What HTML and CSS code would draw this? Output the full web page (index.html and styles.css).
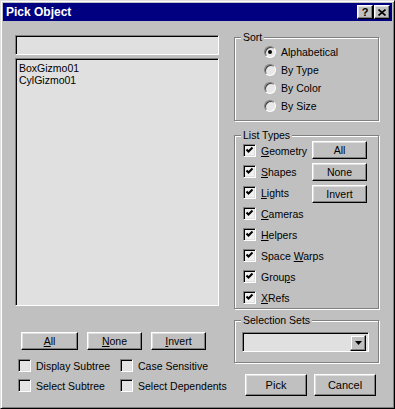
FILE: index.html
```html
<!DOCTYPE html>
<html lang="en">
<head>
    <meta charset="UTF-8">
    <title>Pick Object</title>
    <link rel="stylesheet" href="styles.css">
</head>
<body>

    <div class="window">
        <div class="titlebar">
            <span class="title">Pick Object</span>
            <div class="caption-btns">
                <span class="cap-btn help">?</span>
                <span class="cap-btn">
                    <svg width="8" height="7" viewBox="0 0 8 7"><path d="M0.5 0.5 L7.5 6.5 M7.5 0.5 L0.5 6.5" stroke="#000" stroke-width="1.6"/></svg>
                </span>
            </div>
        </div>

        <div class="client">
            <!-- left: filter + object list -->
            <div class="left">
                <div class="field filter"></div>
                <ul class="field list">
                    <li>BoxGizmo01</li>
                    <li>CylGizmo01</li>
                </ul>
                <div class="btn-row">
                    <button class="btn w57"><u>A</u>ll</button>
                    <button class="btn"><u>N</u>one</button>
                    <button class="btn"><u>I</u>nvert</button>
                </div>
                <div class="opts">
                    <label class="check"><span class="box"></span>Display Subtree</label>
                    <label class="check"><span class="box"></span>Case Sensitive</label>
                    <label class="check"><span class="box"></span>Select Subtree</label>
                    <label class="check"><span class="box"></span>Select Dependents</label>
                </div>
            </div>

            <!-- right: groups -->
            <div class="right">
                <div class="group sort">
                    <div class="group-title">Sort</div>
                    <label class="radio"><span class="dot on"></span>Alphabetical</label>
                    <label class="radio"><span class="dot"></span>By Type</label>
                    <label class="radio"><span class="dot"></span>By Color</label>
                    <label class="radio"><span class="dot"></span>By Size</label>
                </div>

                <div class="group types">
                    <div class="group-title">List Types</div>
                    <div class="types-body">
                        <div class="types-list">
                            <label class="check row"><span class="box on"></span><span><u>G</u>eometry</span></label>
                            <label class="check row"><span class="box on"></span><span><u>S</u>hapes</span></label>
                            <label class="check row"><span class="box on"></span><span><u>L</u>ights</span></label>
                            <label class="check row"><span class="box on"></span><span><u>C</u>ameras</span></label>
                            <label class="check row"><span class="box on"></span><span><u>H</u>elpers</span></label>
                            <label class="check row"><span class="box on"></span><span>Space <u>W</u>arps</span></label>
                            <label class="check row"><span class="box on"></span><span>Grou<u>p</u>s</span></label>
                            <label class="check row"><span class="box on"></span><span><u>X</u>Refs</span></label>
                        </div>
                        <div class="types-btns">
                            <button class="btn">All</button>
                            <button class="btn">None</button>
                            <button class="btn">Invert</button>
                        </div>
                    </div>
                </div>

                <div class="group sets">
                    <div class="group-title">Selection Sets</div>
                    <div class="field combo">
                        <span class="drop">
                            <svg width="7" height="4" viewBox="0 0 7 4"><path d="M0 0 H7 L3.5 4 Z" fill="#000"/></svg>
                        </span>
                    </div>
                </div>

                <div class="pick-row">
                    <button class="btn big">Pick</button>
                    <button class="btn big">Cancel</button>
                </div>
            </div>
        </div>
    </div>

</body>
</html>
```

FILE: styles.css
```css
*{
    margin: 0;
    padding: 0;
    box-sizing: border-box;
}
body{
    font-family: "Liberation Sans", Arial, sans-serif;
    font-size: 10.5px;
    color: #000;
    background: #c0c0c0;
}
u{
    text-decoration: underline;
    text-underline-offset: 1px;
}

/* window frame */
.window{
    width: 395px;
    height: 409px;
    background: #c0c0c0;
    border: 1px solid;
    border-color: #dfdfdf #000 #000 #dfdfdf;
    box-shadow: inset 1px 1px #fff, inset -1px -1px #808080;
    padding: 2px;
    overflow: hidden;
}
.titlebar{
    height: 18px;
    background: #000080;
    display: flex;
    align-items: center;
    justify-content: space-between;
    padding: 0 2px 0 3px;
}
.title{
    color: #fff;
    font-weight: bold;
    font-size: 12px;
}
.caption-btns{
    display: flex;
    gap: 1px;
}
.cap-btn{
    width: 16px;
    height: 14px;
    display: flex;
    align-items: center;
    justify-content: center;
    background: #c0c0c0;
    border: 1px solid;
    border-color: #fff #000 #000 #fff;
    box-shadow: inset -1px -1px #808080, inset 1px 1px #dfdfdf;
    font-weight: bold;
    font-size: 11px;
    line-height: 1;
}

/* shared controls */
.btn{
    font: inherit;
    color: #000;
    height: 18px;
    width: 55px;
    background: #c0c0c0;
    border: 1px solid;
    border-color: #fff #000 #000 #fff;
    box-shadow: inset -1px -1px #808080, inset 1px 1px #dfdfdf;
}
.btn.w57{
    width: 57px;
}
.btn.big{
    width: 62px;
    height: 22px;
    font-size: 11px;
}
.field{
    background: #e0e0e0;
    border: 1px solid;
    border-color: #808080 #fff #fff #808080;
    box-shadow: inset 1px 1px #000, inset -1px -1px #dfdfdf;
}
.check{
    display: flex;
    align-items: center;
    gap: 5px;
    white-space: nowrap;
}
.box{
    width: 13px;
    height: 13px;
    flex: none;
    background: #e4e4e4;
    border: 1px solid;
    border-color: #808080 #fff #fff #808080;
    box-shadow: inset 1px 1px #000, inset -1px -1px #dfdfdf;
}
.box.on{
    background: #f0f0f0 url("data:image/svg+xml,%3Csvg xmlns='http://www.w3.org/2000/svg' width='11' height='11'%3E%3Cpath d='M2.5 4.5 L4.5 6.5 L8.5 2.5' fill='none' stroke='%23000' stroke-width='2'/%3E%3C/svg%3E") center no-repeat;
}

/* layout */
.client{
    display: flex;
    gap: 15px;
    padding: 10px 13px 0 12px;
}
.left{
    width: 204px;
    padding-top: 4px;
    display: flex;
    flex-direction: column;
}
.filter{
    height: 20px;
}
.list{
    margin-top: 3px;
    height: 248px;
    list-style: none;
    padding: 3px 3px;
}
.list li{
    line-height: 12px;
}
.btn-row{
    display: flex;
    gap: 9px;
    margin-top: 26px;
    padding-left: 6px;
}
.opts{
    display: grid;
    grid-template-columns: 102px 1fr;
    row-gap: 7px;
    margin-top: 9px;
    padding-left: 3px;
}
.opts .check{
    height: 13px;
}

.right{
    width: 145px;
}
.group{
    border: 1px solid #808080;
    box-shadow: 1px 1px 0 #fff, inset 1px 1px 0 #fff;
}
.group-title{
    display: table;
    margin: -7px 0 0 6px;
    padding: 0 2px;
    line-height: 12px;
    background: #c0c0c0;
}
.sort{
    margin-top: 6px;
    padding: 0 0 5px 29px;
}
.sort .group-title{
    margin-left: -23px;
}
.radio{
    height: 18px;
    display: flex;
    align-items: center;
    gap: 5px;
}
.dot{
    width: 12px;
    height: 12px;
    border-radius: 50%;
    background: #e8e8e8;
    border: 1px solid;
    border-color: #808080 #fff #fff #808080;
    box-shadow: inset 1px 1px #404040;
    display: flex;
    align-items: center;
    justify-content: center;
}
.dot.on::after{
    content: "";
    width: 4px;
    height: 4px;
    border-radius: 50%;
    background: #000;
}

.types{
    margin-top: 14px;
    padding: 0 10px 0 8px;
}
.types .group-title{
    margin-left: -2px;
    margin-bottom: -1px;
}
.types-body{
    display: flex;
}
.types-list{
    width: 69px;
    flex: none;
}
.types-list .row{
    height: 21px;
}
.types-btns{
    flex: none;
    display: flex;
    flex-direction: column;
    gap: 4px;
    padding-top: 1px;
}

.sets{
    margin-top: 11px;
    padding: 0 0 10px 7px;
}
.sets .group-title{
    margin-left: -1px;
    margin-bottom: 6px;
}
.combo{
    width: 127px;
    height: 20px;
    display: flex;
    justify-content: flex-end;
    padding: 2px;
}
.drop{
    width: 16px;
    height: 16px;
    display: flex;
    align-items: center;
    justify-content: center;
    background: #c0c0c0;
    border: 1px solid;
    border-color: #dfdfdf #000 #000 #dfdfdf;
    box-shadow: inset -1px -1px #808080, inset 1px 1px #fff;
}
.pick-row{
    display: flex;
    gap: 7px;
    margin-top: 11px;
    padding-left: 11px;
}
```
